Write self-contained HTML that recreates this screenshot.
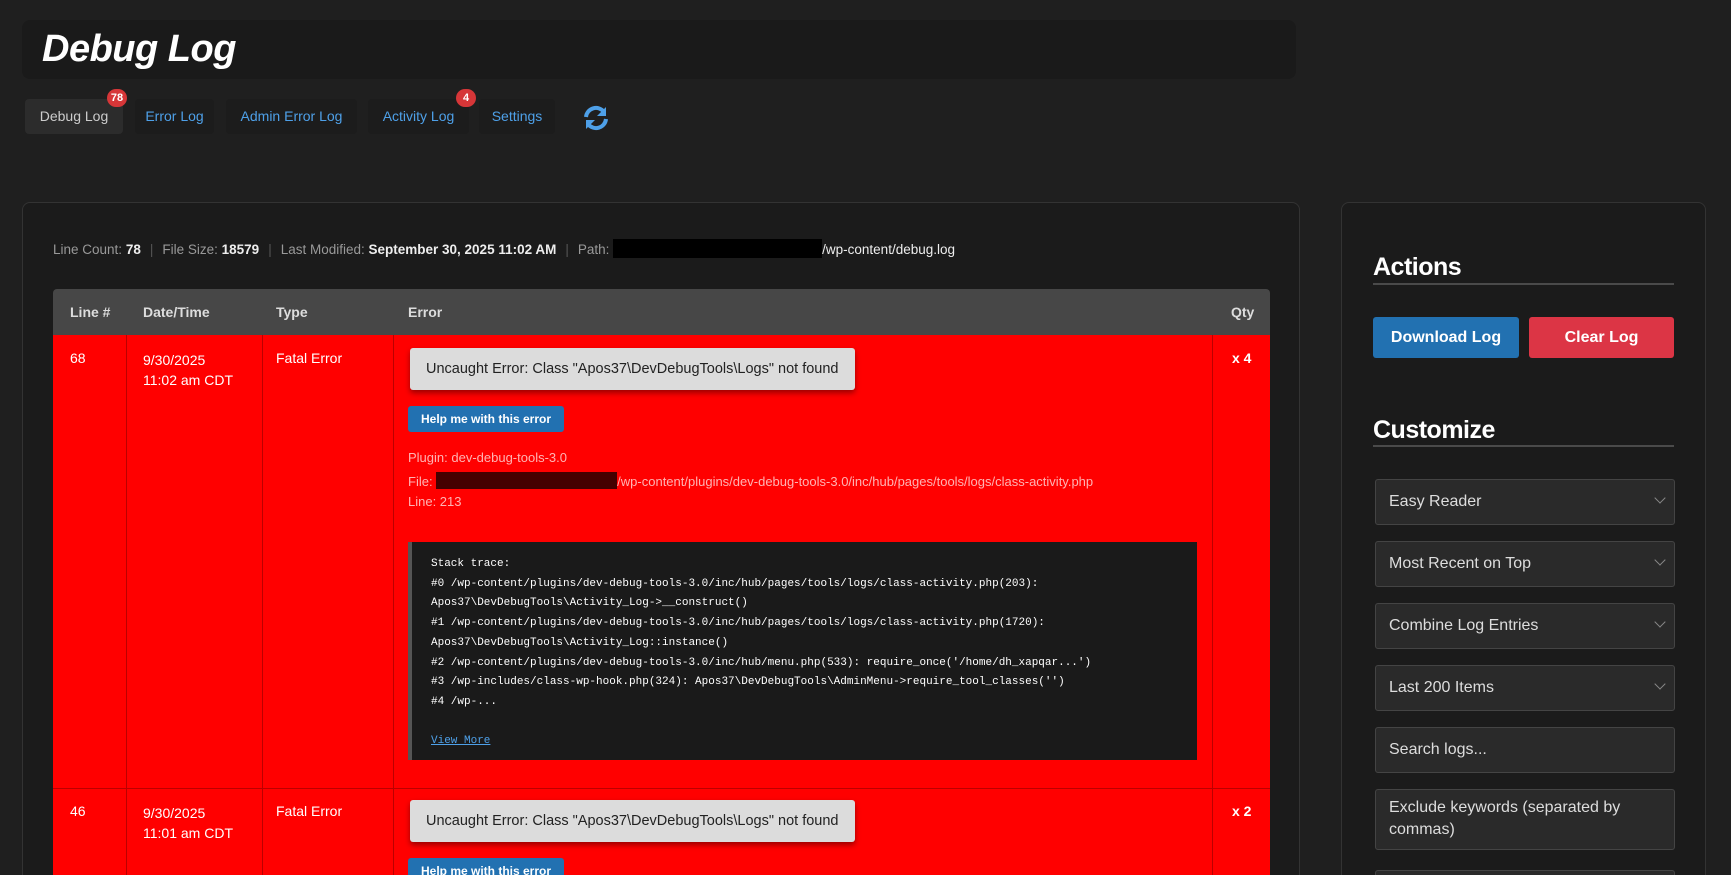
<!DOCTYPE html>
<html style="width:1731px;height:875px;overflow:hidden"><head><meta charset="utf-8"><style>
*{box-sizing:border-box;margin:0;padding:0}
body{width:1731px;height:875px;overflow:hidden;background:#1f1f1f;font-family:"Liberation Sans",sans-serif;color:#ddd;position:relative}
.abs{position:absolute}
.title{left:22px;top:20px;width:1274px;height:59px;background:#1a1a1a;border-radius:8px}
.title h1{position:absolute;left:20px;top:8px;font-size:38px;font-style:italic;font-weight:bold;color:#fff;letter-spacing:-0.5px}
.tab{position:absolute;top:99px;height:35px;line-height:35px;font-size:14px;color:#4ea0e8;background:#1c1c1c;border-radius:4px;text-align:center}
.badge{position:absolute;top:89px;width:20px;height:18px;border-radius:9px;background:#d63638;color:#fff;font-size:11px;font-weight:bold;text-align:center;line-height:18px}
.panel{background:#1b1b1b;border:1px solid #333;border-radius:8px}
.meta{left:53px;top:239px;font-size:13.5px;color:#999}
.meta b{color:#eee}
.meta .sep{color:#555;margin:0 9px}
.th{position:absolute;top:289px;height:46px;line-height:46px;font-size:14px;color:#ddd;font-weight:bold}
.cell{position:absolute;font-size:14px;color:#fff}
.errbox{position:absolute;background:#dcdcdc;color:#222;font-size:14.5px;border-radius:3px;box-shadow:0 3px 6px rgba(0,0,0,.4);padding:0 16px;line-height:42px;height:42px}
.help{position:absolute;background:#2271b1;color:#fff;font-size:12px;font-weight:bold;border-radius:3px;height:26px;line-height:26px;padding:0 13px}
.info{position:absolute;left:408px;font-size:13px;color:#ffb3b3}
.stack{position:absolute;left:408px;top:542px;width:789px;height:218px;background:#1a1a1a;border-left:4px solid #555;padding:13px 0 0 19px;font-family:"Liberation Mono",monospace;font-size:11px;line-height:19.7px;color:#fff}
.stack a{color:#4ea0e8;text-decoration:underline}
.sel{position:absolute;left:1375px;width:300px;height:46px;background:#2a2a2a;border:1px solid #444;border-radius:3px;font-size:16px;color:#ddd;line-height:44px;padding-left:13px}
.sel .ch{position:absolute;right:10px;top:14px;width:8px;height:8px;border-right:1.5px solid #888;border-bottom:1.5px solid #888;transform:rotate(45deg)}
.h2{position:absolute;left:1373px;font-size:25px;font-weight:bold;color:#fff;letter-spacing:-0.5px}
.hl{position:absolute;left:1373px;width:301px;height:2px;background:#4a4a4a}
.btn{position:absolute;top:317px;height:41px;line-height:41px;color:#fff;font-weight:bold;font-size:16px;text-align:center;border-radius:3px}
</style></head><body>
<div class="abs title"><h1>Debug Log</h1></div>
<div class="tab" style="left:25px;width:98px;background:#2c2c2c;color:#ccc">Debug Log</div>
<div class="badge" style="left:107px">78</div>
<div class="tab" style="left:135px;width:79px">Error Log</div>
<div class="tab" style="left:226px;width:131px">Admin Error Log</div>
<div class="tab" style="left:368px;width:101px">Activity Log</div>
<div class="badge" style="left:456px">4</div>
<div class="tab" style="left:479px;width:76px">Settings</div>
<svg class="abs" style="left:582px;top:104px" width="28" height="28" viewBox="0 0 28 28"><path d="M4 13a10 10 0 0 1 18-5" fill="none" stroke="#4ea0e8" stroke-width="4"/><path d="M24 3v9h-9z" fill="#4ea0e8"/><path d="M24 15a10 10 0 0 1-18 5" fill="none" stroke="#4ea0e8" stroke-width="4"/><path d="M4 25v-9h9z" fill="#4ea0e8"/></svg>

<div class="abs panel" style="left:22px;top:202px;width:1278px;height:700px"></div>
<div class="abs meta">Line Count: <b>78</b><span class="sep">|</span>File Size: <b>18579</b><span class="sep">|</span>Last Modified: <b>September 30, 2025 11:02 AM</b><span class="sep">|</span>Path: <span style="display:inline-block;width:209px;height:19px;background:#000;vertical-align:-4px"></span><b style="font-weight:normal;color:#eee">/wp-content/debug.log</b></div>

<div class="abs" style="left:53px;top:289px;width:1217px;height:46px;background:#474747;border-radius:4px 4px 0 0"></div>
<div class="th" style="left:70px">Line #</div>
<div class="th" style="left:143px">Date/Time</div>
<div class="th" style="left:276px">Type</div>
<div class="th" style="left:408px">Error</div>
<div class="th" style="left:1231px">Qty</div>
<div class="abs" style="left:53px;top:335px;width:1217px;height:560px;background:#f00"></div>
<div class="abs" style="left:126px;top:335px;width:1px;height:560px;background:#b00"></div>
<div class="abs" style="left:262px;top:335px;width:1px;height:560px;background:#b00"></div>
<div class="abs" style="left:393px;top:335px;width:1px;height:560px;background:#b00"></div>
<div class="abs" style="left:1212px;top:335px;width:1px;height:560px;background:#b00"></div>
<div class="abs" style="left:53px;top:788px;width:1217px;height:1px;background:#b00"></div>

<div class="cell" style="left:70px;top:350px">68</div>
<div class="cell" style="left:143px;top:350px;line-height:20px">9/30/2025<br>11:02 am CDT</div>
<div class="cell" style="left:276px;top:350px">Fatal Error</div>
<div class="cell" style="left:1232px;top:350px;font-weight:bold">x 4</div>
<div class="errbox" style="left:410px;top:348px">Uncaught Error: Class "Apos37\DevDebugTools\Logs" not found</div>
<div class="help" style="left:408px;top:406px">Help me with this error</div>
<div class="info" style="top:450px">Plugin: dev-debug-tools-3.0</div>
<div class="info" style="top:472px">File: <span style="display:inline-block;width:181px;height:17px;background:#450000;vertical-align:-3px"></span>/wp-content/plugins/dev-debug-tools-3.0/inc/hub/pages/tools/logs/class-activity.php</div>
<div class="info" style="top:494px">Line: 213</div>
<div class="stack">Stack trace:<br>#0 /wp-content/plugins/dev-debug-tools-3.0/inc/hub/pages/tools/logs/class-activity.php(203):<br>Apos37\DevDebugTools\Activity_Log-&gt;__construct()<br>#1 /wp-content/plugins/dev-debug-tools-3.0/inc/hub/pages/tools/logs/class-activity.php(1720):<br>Apos37\DevDebugTools\Activity_Log::instance()<br>#2 /wp-content/plugins/dev-debug-tools-3.0/inc/hub/menu.php(533): require_once('/home/dh_xapqar...')<br>#3 /wp-includes/class-wp-hook.php(324): Apos37\DevDebugTools\AdminMenu-&gt;require_tool_classes('')<br>#4 /wp-...<br><br><a>View More</a></div>

<div class="cell" style="left:70px;top:803px">46</div>
<div class="cell" style="left:143px;top:803px;line-height:20px">9/30/2025<br>11:01 am CDT</div>
<div class="cell" style="left:276px;top:803px">Fatal Error</div>
<div class="cell" style="left:1232px;top:803px;font-weight:bold">x 2</div>
<div class="errbox" style="left:410px;top:800px">Uncaught Error: Class "Apos37\DevDebugTools\Logs" not found</div>
<div class="help" style="left:408px;top:858px">Help me with this error</div>

<div class="abs panel" style="left:1341px;top:202px;width:365px;height:700px"></div>
<div class="h2" style="top:253px">Actions</div>
<div class="hl" style="top:283px"></div>
<div class="btn" style="left:1373px;width:146px;background:#2271b1">Download Log</div>
<div class="btn" style="left:1529px;width:145px;background:#dc3545">Clear Log</div>
<div class="h2" style="top:416px">Customize</div>
<div class="hl" style="top:445px"></div>
<div class="sel" style="top:479px">Easy Reader<span class="ch"></span></div>
<div class="sel" style="top:541px">Most Recent on Top<span class="ch"></span></div>
<div class="sel" style="top:603px">Combine Log Entries<span class="ch"></span></div>
<div class="sel" style="top:665px">Last 200 Items<span class="ch"></span></div>
<div class="sel" style="top:727px">Search logs...</div>
<div class="sel" style="top:789px;height:61px;line-height:22px;padding-top:7px">Exclude keywords (separated by commas)</div>
<div class="sel" style="top:870px"></div>
</body></html>
